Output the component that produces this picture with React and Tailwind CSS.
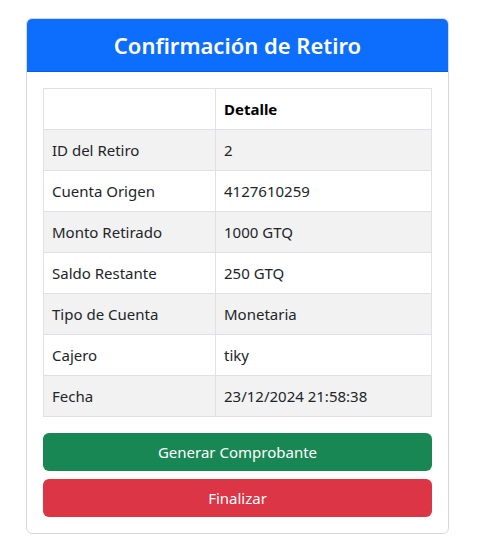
export default function App() {
  const rows = [
    ["ID del Retiro", "2"],
    ["Cuenta Origen", "4127610259"],
    ["Monto Retirado", "1000 GTQ"],
    ["Saldo Restante", "250 GTQ"],
    ["Tipo de Cuenta", "Monetaria"],
    ["Cajero", "tiky"],
    ["Fecha", "23/12/2024 21:58:38"],
  ];
  return (
    <div className="min-h-[555px] bg-white pt-[18px] pl-[26px]" style={{ fontFamily: '"Noto Sans", "Open Sans", sans-serif' }}>
      <div className="w-[423px] border border-[#d6d8db] rounded-[6px] overflow-hidden text-[#212529]">
        <div className="h-[53px] bg-[#0d6efd] flex items-center justify-center border-b border-[#0b5ed7]">
          <h2 className="text-white text-[22px] font-semibold leading-none">Confirmación de Retiro</h2>
        </div>
        <div className="p-4">
          <table className="w-full border-collapse text-[15px]">
            <tbody>
              <tr className="h-[41px]">
                <th className="border border-[#dee2e6] w-[172px] px-2 text-left font-bold"></th>
                <th className="border border-[#dee2e6] px-2 text-left font-bold text-black">Detalle</th>
              </tr>
              {rows.map(([k, v], i) => (
                <tr key={k} className={i % 2 === 0 ? "h-[41px] bg-[#f2f2f2]" : "h-[41px] bg-white"}>
                  <td className="border border-[#dee2e6] px-2">{k}</td>
                  <td className="border border-[#dee2e6] px-2">{v}</td>
                </tr>
              ))}
            </tbody>
          </table>
          <div className="mt-4 flex flex-col gap-2">
            <button className="h-[38px] w-full rounded-[6px] bg-[#198754] text-white text-[15px]">Generar Comprobante</button>
            <button className="h-[38px] w-full rounded-[6px] bg-[#dc3545] text-white text-[15px]">Finalizar</button>
          </div>
        </div>
      </div>
    </div>
  );
}
